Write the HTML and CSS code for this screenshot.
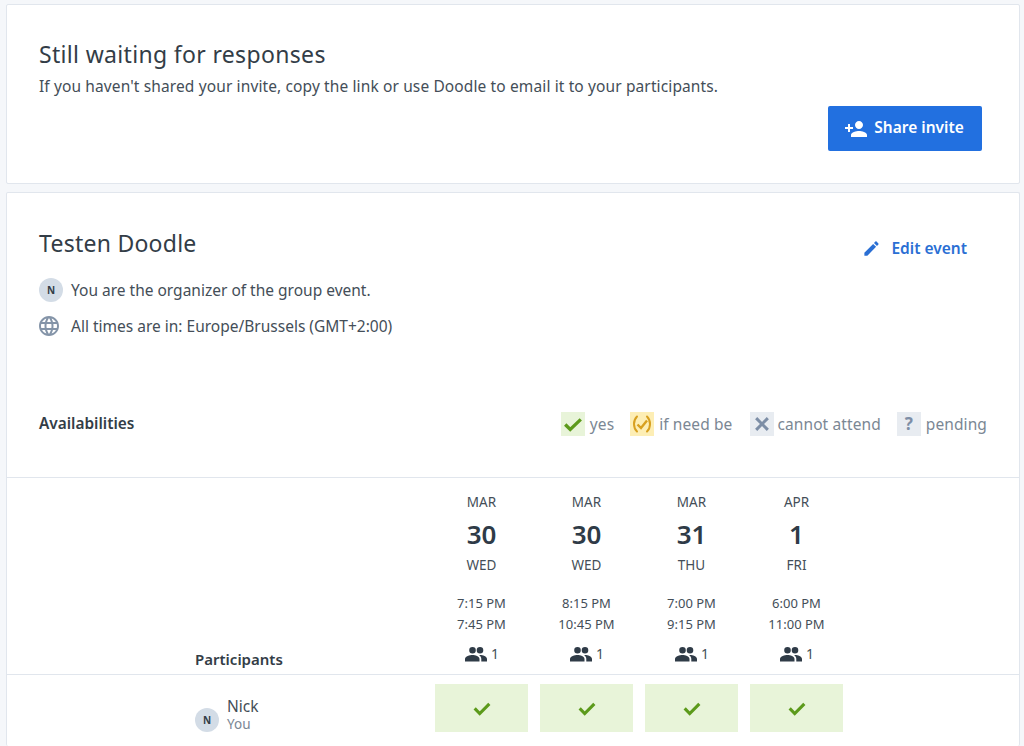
FILE: index.html
```html
<!DOCTYPE html>
<html lang="en">
<head>
<meta charset="utf-8">
<title>Testen Doodle</title>
<link rel="stylesheet" href="styles.css">
</head>
<body>
<main class="page">
  <section class="card card-wait">
    <h1 class="wait-title">Still waiting for responses</h1>
    <p class="wait-text">If you haven't shared your invite, copy the link or use Doodle to email it to your participants.</p>
    <div class="wait-actions">
      <button class="btn-primary">
        <svg class="btn-icon" viewBox="0 0 24 24" width="24" height="24"><path fill="#fff" d="M15 12c2.2 0 4-1.8 4-4s-1.8-4-4-4-4 1.800-4 4 1.800 4 4 4zM6 10V7H4v3H1v2h3v3h2v-3h3v-2H6zm9 4c-2.700 0-8 1.300-8 4v2h16v-2c0-2.700-5.300-4-8-4z"/></svg>
        <span class="btn-label">Share invite</span>
      </button>
    </div>
  </section>

  <section class="card card-event">
    <div class="event-head">
      <div class="event-info">
        <h2 class="event-title">Testen Doodle</h2>
        <div class="info-row info-organizer"><span class="avatar">N</span><span>You are the organizer of the group event.</span></div>
        <div class="info-row info-tz">
          <svg class="globe" viewBox="0 0 24 24" width="24" height="24"><path fill="#8494a8" d="M12 2C6.500 2 2 6.500 2 12s4.500 10 10 10 10-4.500 10-10S17.500 2 12 2zm6.900 6h-2.950c-.32-1.250-.78-2.450-1.380-3.560 1.840.63 3.370 1.910 4.330 3.560zM12 4.040c.83 1.200 1.480 2.530 1.910 3.960h-3.820c.43-1.430 1.080-2.760 1.910-3.960zM4.260 14C4.100 13.360 4 12.690 4 12s.1-1.360.26-2h3.380c-.08.660-.14 1.320-.14 2s.06 1.340.14 2H4.260zm.82 2h2.950c.32 1.250.78 2.450 1.380 3.560-1.840-.63-3.370-1.900-4.330-3.560zm2.950-8H5.080c.96-1.660 2.490-2.930 4.330-3.560C8.810 5.550 8.350 6.750 8.030 8zM12 19.960c-.83-1.200-1.480-2.530-1.910-3.960h3.820c-.43 1.430-1.080 2.760-1.910 3.960zM14.340 14H9.660c-.09-.66-.16-1.320-.16-2s.07-1.350.16-2h4.680c.09.650.16 1.320.16 2s-.07 1.340-.16 2zm.25 5.560c.6-1.110 1.060-2.310 1.380-3.560h2.950c-.96 1.650-2.490 2.930-4.330 3.560zM16.360 14c.08-.66.14-1.320.14-2s-.06-1.340-.14-2h3.380c.16.640.26 1.310.26 2s-.1 1.360-.26 2h-3.380z"/></svg>
          <span>All times are in: Europe/Brussels (GMT+2:00)</span>
        </div>
      </div>
      <a class="edit-link" href="#">
        <svg viewBox="0 0 24 24" width="19" height="19"><path fill="#2a6fd4" d="M3 17.250V21h3.750L17.810 9.940l-3.750-3.750L3 17.250zM20.710 7.040c.39-.39.39-1.020 0-1.410l-2.340-2.340c-.39-.39-1.020-.39-1.410 0l-1.830 1.830 3.750 3.750 1.830-1.830z"/></svg>
        <span>Edit event</span>
      </a>
    </div>

    <div class="avail-bar">
      <strong class="avail-title">Availabilities</strong>
      <ul class="legend">
        <li class="legend-item">
          <span class="swatch swatch-yes"><svg viewBox="0 0 24 24" width="22" height="22"><path fill="none" stroke="#5c9a1b" stroke-width="3.600" d="M3.500 12.500l5.500 5.500L20.500 7"/></svg></span>yes
        </li>
        <li class="legend-item">
          <span class="swatch swatch-maybe"><svg viewBox="0 0 24 24" width="24" height="24"><path fill="none" stroke="#d8a020" stroke-width="2" stroke-linecap="round" d="M7 4.500C3 8.500 3 15.500 7 19.500M17 4.500c4 4 4 11 0 15"/><path fill="none" stroke="#d8a020" stroke-width="2.400" d="M7.500 12.500l3.500 3.500 6-7.500"/></svg></span>if need be
        </li>
        <li class="legend-item">
          <span class="swatch swatch-no"><svg viewBox="0 0 24 24" width="20" height="20"><path fill="none" stroke="#7d8ea6" stroke-width="3.600" d="M5 5l14 14M19 5L5 19"/></svg></span>cannot attend
        </li>
        <li class="legend-item">
          <span class="swatch swatch-pending">?</span>pending
        </li>
      </ul>
    </div>

    <div class="table">
      <div class="grid grid-head">
        <div class="participants-label">Participants</div>
        <div class="col">
          <span class="mon">MAR</span><span class="day">30</span><span class="dow">WED</span>
          <span class="times">7:15 PM<br>7:45 PM</span>
          <span class="count"><svg viewBox="0 0 24 24" width="24" height="24"><use href="#people"/></svg>1</span>
        </div>
        <div class="col">
          <span class="mon">MAR</span><span class="day">30</span><span class="dow">WED</span>
          <span class="times">8:15 PM<br>10:45 PM</span>
          <span class="count"><svg viewBox="0 0 24 24" width="24" height="24"><use href="#people"/></svg>1</span>
        </div>
        <div class="col">
          <span class="mon">MAR</span><span class="day">31</span><span class="dow">THU</span>
          <span class="times">7:00 PM<br>9:15 PM</span>
          <span class="count"><svg viewBox="0 0 24 24" width="24" height="24"><use href="#people"/></svg>1</span>
        </div>
        <div class="col">
          <span class="mon">APR</span><span class="day">1</span><span class="dow">FRI</span>
          <span class="times">6:00 PM<br>11:00 PM</span>
          <span class="count"><svg viewBox="0 0 24 24" width="24" height="24"><use href="#people"/></svg>1</span>
        </div>
      </div>
      <div class="grid grid-row">
        <div class="person">
          <span class="avatar">N</span>
          <div class="person-text"><span class="person-name">Nick</span><span class="person-sub">You</span></div>
        </div>
        <div class="cell"><svg viewBox="0 0 24 24" width="22" height="22"><use href="#tick"/></svg></div>
        <div class="cell"><svg viewBox="0 0 24 24" width="22" height="22"><use href="#tick"/></svg></div>
        <div class="cell"><svg viewBox="0 0 24 24" width="22" height="22"><use href="#tick"/></svg></div>
        <div class="cell"><svg viewBox="0 0 24 24" width="22" height="22"><use href="#tick"/></svg></div>
      </div>
    </div>
  </section>
</main>
<svg class="defs" width="0" height="0">
  <defs>
    <path id="tick" fill="none" stroke="#5c9a1b" stroke-width="3.400" d="M4 12.500l5.500 5.500L20 7.500"/>
    <path id="people" fill="#2f3b47" d="M8.500 11.500a3.300 3.300 0 1 0 0-6.600 3.300 3.300 0 0 0 0 6.600zm7.500 0a3.300 3.300 0 1 0 0-6.600 3.300 3.300 0 0 0 0 6.600zM8.500 13C5.800 13 1 14.300 1 17v2.500h14.500V17c0-2.700-4.300-4-7-4zm7.600 0c-.4 0-.7 0-1.100.1 1.400.9 2.300 2.200 2.300 3.900v2.500H23V17c0-2.700-4.200-4-6.900-4z"/>
  </defs>
</svg>
</body>
</html>
```

FILE: styles.css
```css
* { box-sizing: border-box; }
html, body { height: 100%; overflow: hidden; }
body {
  margin: 0;
  background: #f5f7fa;
  color: #3c4650;
  font-family: "Noto Sans", "Open Sans", sans-serif;
  font-size: 16px;
}
.defs { position: absolute; }
.page { display: flex; flex-direction: column; gap: 8px; height: 100vh; padding: 4px 4px 0 6px; }
.card { background: #fff; border: 1px solid #e1e6ed; border-radius: 2px; }
.card-wait { flex: none; height: 180px; padding: 35px 32px 0; }
.card-event { flex: 1; min-height: 0; border-bottom: 0; }
.wait-title { margin: 0; font-size: 23px; line-height: 28px; font-weight: 400; letter-spacing: 0.33px; color: #333d47; }
.wait-text { margin: 6px 0 0; font-size: 15.500px; line-height: 24px; letter-spacing: 0.12px; color: #444e58; }
.wait-actions { display: flex; justify-content: flex-end; margin: 8px 5px 0 0; }
.btn-primary {
  display: flex; align-items: center; justify-content: center; gap: 6px;
  width: 154px; height: 45px; padding: 0;
  background: #2270e0; color: #fff; border: 0; border-radius: 2px;
  font: 600 15.500px "Noto Sans", sans-serif;
}
.btn-icon { margin-left: -2px; }
.btn-label { margin-bottom: 4px; }
.event-head { display: flex; justify-content: space-between; padding: 34px 52px 0 32px; height: 169px; }
.event-title { margin: 0 0 19px; font-size: 23px; line-height: 32px; font-weight: 400; letter-spacing: 0.25px; color: #333d47; }
.info-row { display: flex; align-items: center; gap: 8px; font-size: 15.500px; line-height: 24px; color: #444e58; height: 24px; }
.info-tz { margin-top: 12px; gap: 10px; }
.globe { flex: none; margin: 0 0 1px -2px; }
.avatar {
  display: flex; align-items: center; justify-content: center; flex: none;
  width: 24px; height: 24px; border-radius: 50%;
  background: #d3dce6; color: #333d47; font-size: 10px; font-weight: 700;
}
.edit-link {
  display: flex; align-items: center; gap: 10px; height: 24px; margin-top: 9px;
  color: #2a6fd4; font-size: 15.500px; font-weight: 600; text-decoration: none;
}
.avail-bar { display: flex; justify-content: space-between; align-items: center; padding: 48px 32px 40px; height: 115px; }
.avail-title { font-size: 15.400px; font-weight: 600; color: #333d47; }
.legend { display: flex; gap: 16px; margin: 0; padding: 0; list-style: none; font-size: 15.500px; letter-spacing: 0.1px; color: #7b8794; }
.legend-item { display: flex; align-items: center; gap: 5px; }
.swatch { display: flex; align-items: center; justify-content: center; width: 24px; height: 24px; }
.swatch-yes { background: #e8f4d9; }
.swatch-maybe { background: #fdeeb5; }
.swatch-no, .swatch-pending { background: #e8ecf1; }
.swatch-no { margin: 0 -2px 0 2px; }
.swatch-pending { color: #7d8ea6; font-weight: 700; font-size: 17px; }
.table { border-top: 1px solid #e1e6ed; }
.grid { display: grid; grid-template-columns: 240px repeat(4, 105px); padding-left: 188px; }
.grid-head { height: 197px; border-bottom: 1px solid #e1e6ed; }
.participants-label { align-self: end; padding-bottom: 5px; font-size: 15px; font-weight: 600; color: #333d47; }
.col { display: flex; flex-direction: column; align-items: center; width: 93px; padding-top: 14px; color: #444e58; }
.mon, .dow { font-size: 13.500px; line-height: 20px; }
.day { font-size: 26px; line-height: 32px; font-weight: 600; color: #2f3b47; margin: 6px 0 5px; }
.times { margin-top: 18px; font-size: 13px; line-height: 21px; text-align: center; }
.count { display: flex; align-items: center; gap: 3px; margin-top: 7px; font-size: 14px; line-height: 24px; }
.grid-row { padding-top: 9px; }
.person { display: flex; align-items: center; gap: 8px; margin-top: 12px; height: 48px; }
.person-text { display: flex; flex-direction: column; margin-bottom: 10px; }
.person-name { font-size: 15.500px; line-height: 18px; color: #444e58; }
.person-sub { font-size: 13.500px; line-height: 18px; color: #7b8794; }
.cell { display: flex; align-items: center; justify-content: center; align-self: start; width: 93px; height: 48px; background: #e8f4d9; }
```
